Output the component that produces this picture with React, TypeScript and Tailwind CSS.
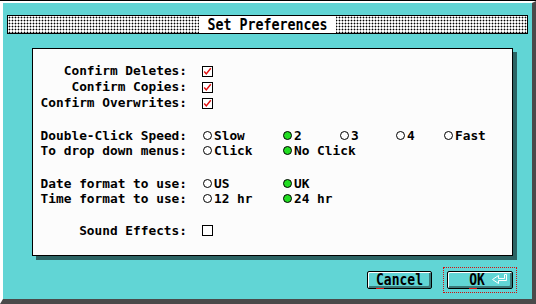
import React from "react";

const mono = { fontFamily: '"DejaVu Sans Mono", "Liberation Mono", monospace' };

function Check({ on }: { on: boolean }) {
  return (
    <span className="inline-flex w-[11px] h-[11px] border border-black bg-white items-center justify-center">
      {on && (
        <svg width="11" height="11" viewBox="0 0 11 11" className="block">
          <path d="M1.5 5.5 L4 8.5 L9.5 1.5" stroke="#e01010" strokeWidth="1.8" fill="none" />
        </svg>
      )}
    </span>
  );
}

function Radio({ on, label, w }: { on: boolean; label: string; w?: string }) {
  return (
    <span className={`inline-flex items-center ${w ?? ""}`}>
      <span
        className={`w-[9px] h-[9px] rounded-full border border-black mr-[2px] ${on ? "bg-[#22dd22]" : "bg-white"}`}
      />
      <span>{label}</span>
    </span>
  );
}

function Row({ label, children, lh }: { label: string; children?: React.ReactNode; lh: string }) {
  return (
    <div className={`flex items-center ${lh}`}>
      <span className="w-[150px] text-right whitespace-pre">{label}</span>
      <div className="ml-[15px] flex items-center">{children}</div>
    </div>
  );
}

export default function App() {
  return (
    <div className="w-[536px] h-[304px] bg-black pt-px overflow-hidden" style={mono}>
      <div className="h-[303px] flex flex-col bg-[#61d5d5] border-l-[3px] border-t-2 border-white border-r-4 border-r-[#4a4a4a] border-b-[5px] border-b-[#4a4a4a]">
        {/* title bar */}
        <div className="mt-[12px] mx-[4px] h-[19px] border border-black bg-white bg-[radial-gradient(circle,#000_0.8px,transparent_1.1px)] bg-[length:3px_3px] flex justify-center">
          <div className="bg-white h-full px-[8px] flex items-center text-[13.3px] font-bold text-black">
            <span className="inline-block scale-y-125">Set Preferences</span>
          </div>
        </div>

        {/* panel */}
        <div className="mt-[14px] ml-[29px] w-[481px] h-[208px] border border-black bg-[#fcfcfc] shadow-[4px_4px_0_#2c6464] pt-[14px] pl-[4px] text-[12.8px] font-bold text-black">
          <Row label="Confirm Deletes:" lh="h-[16px]">
            <Check on />
          </Row>
          <Row label="Confirm Copies:" lh="h-[16px]">
            <Check on />
          </Row>
          <Row label="Confirm Overwrites:" lh="h-[16px]">
            <Check on />
          </Row>

          <div className="mt-[17px]">
            <Row label="Double-Click Speed:" lh="h-[15px]">
              <Radio on={false} label="Slow" w="w-[80px] ml-px" />
              <Radio on label="2" w="w-[57px]" />
              <Radio on={false} label="3" w="w-[56px]" />
              <Radio on={false} label="4" w="w-[48px]" />
              <Radio on={false} label="Fast" />
            </Row>
            <Row label="To drop down menus:" lh="h-[15px]">
              <Radio on={false} label="Click" w="w-[80px] ml-px" />
              <Radio on label="No Click" />
            </Row>
          </div>

          <div className="mt-[18px]">
            <Row label="Date format to use:" lh="h-[15px]">
              <Radio on={false} label="US" w="w-[80px] ml-px" />
              <Radio on label="UK" />
            </Row>
            <Row label="Time format to use:" lh="h-[15px]">
              <Radio on={false} label="12 hr" w="w-[80px] ml-px" />
              <Radio on label="24 hr" />
            </Row>
          </div>

          <div className="mt-[17px]">
            <Row label="Sound Effects:" lh="h-[15px]">
              <Check on={false} />
            </Row>
          </div>
        </div>

        {/* buttons */}
        <div className="mt-[11px] flex justify-end items-center pr-[15px] text-[13px] font-bold text-black">
          <button className="w-[65px] h-[18px] rounded-[2px] border border-black bg-[#61d5d5] shadow-[inset_1px_1px_0_#ffffff,inset_-2px_-2px_0_#3a7a7a] flex items-center justify-center">
            <span className="relative">
              <span className="inline-block scale-y-125">Cancel</span>
              <span className="absolute left-0 bottom-[1px] w-[8px] h-px bg-[#e01010]" />
            </span>
          </button>
          <div className="ml-[11px] w-[74px] h-[26px] border border-dotted border-[#d01010] flex items-center justify-center">
            <button className="relative w-[66px] h-[18px] rounded-[2px] border border-black bg-[#61d5d5] shadow-[inset_1px_1px_0_#ffffff,inset_-2px_-2px_0_#3a7a7a] flex items-center justify-center">
              <span className="relative -ml-[6px]">
                <span className="inline-block scale-y-125">OK</span>
                <span className="absolute left-0 bottom-[1px] w-[8px] h-px bg-[#e01010]" />
              </span>
              <svg width="18" height="11" viewBox="0 0 18 11" className="absolute right-[3px] top-[2px]">
                <path d="M15.5 0.5 V6.5 H7.5 V9.5 L1.5 5.5 L7.5 1.5 V4.5 H13.5 V0.5 Z" fill="none" stroke="#ffffff" strokeWidth="1" />
              </svg>
            </button>
          </div>
        </div>
      </div>
    </div>
  );
}
